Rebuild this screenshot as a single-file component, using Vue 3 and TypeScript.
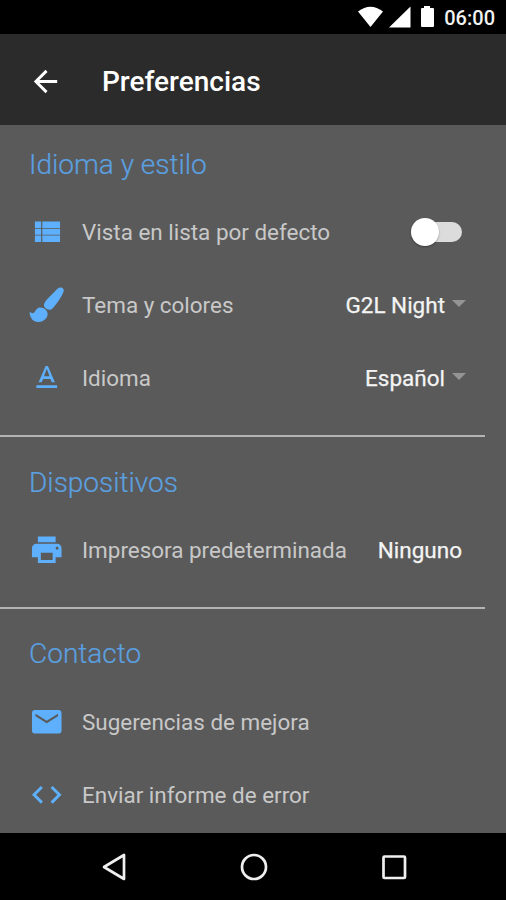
<script setup lang="ts">
import { ref } from 'vue'

type Kind = 'toggle' | 'select' | 'value' | 'link'
interface Row { icon: string; box: string; label: string; kind: Kind; value?: string }
interface Section { title: string; rows: Row[] }

const grid = '0 0 24 24'
const sections: Section[] = [
  {
    title: 'Idioma y estilo',
    rows: [
      { icon: 'M4 14h4.2v-4H4v4zm0 5h4.2v-4.4H4V19zM4 9.4h4.2V5H4v4.4zm5 4.6h12v-4H9v4zm0 5h12v-4.4H9V19zM9 5v4.4h12V5H9z', box: grid, label: 'Vista en lista por defecto', kind: 'toggle' },
      { icon: 'M31.2.5C34 .2 35.4 2.5 34.4 5C33 9 27.500 17.500 23.500 21.500C20.500 24.500 14.500 21.500 15 17.500C15.300 15 18 12.600 20.500 9.700L28 2.200C29 1.200 30 .7 31.200.500ZM10.700 20.500C14.500 20 18.300 23 18.600 26.500C18.900 31 15 34.700 9.500 35C4.500 35.200 1.200 31.500.500 25.500C1.800 24.800 2.800 26.800 4.500 26C6.500 25 6.800 21 10.700 20.500Z', box: '0 0 35.5 35.5', label: 'Tema y colores', kind: 'select', value: 'G2L Night' },
      { icon: 'M5 17v2h14v-2H5zm4.500-4.200h5l.9 2.200h2.100L12.750 4h-1.500L6.500 15h2.100l.9-2.200zM12 5.980L13.870 11h-3.740L12 5.980z', box: grid, label: 'Idioma', kind: 'select', value: 'Español' },
    ],
  },
  {
    title: 'Dispositivos',
    rows: [
      { icon: 'M19 8H5c-1.660 0-3 1.340-3 3v6h4v4h12v-4h4v-6c0-1.660-1.340-3-3-3zm-3 11H8v-5h8v5zm3-7c-.55 0-1-.45-1-1s.45-1 1-1 1 .45 1 1-.45 1-1 1zm-1-9H6v4h12V3z', box: grid, label: 'Impresora predeterminada', kind: 'value', value: 'Ninguno' },
    ],
  },
  {
    title: 'Contacto',
    rows: [
      { icon: 'M20 4H4c-1.100 0-1.990.9-1.990 2L2 18c0 1.100.9 2 2 2h16c1.100 0 2-.9 2-2V6c0-1.100-.9-2-2-2zm-.4 4.250L12 13l-7.600-4.750V6.600l7.600 4.750 7.600-4.750z', box: grid, label: 'Sugerencias de mejora', kind: 'link' },
      { icon: 'M9.400 16.600L4.800 12l4.600-4.600L8 6l-6 6 6 6 1.400-1.400zm5.200 0l4.600-4.600-4.600-4.600L16 6l6 6-6 6-1.400-1.400z', box: grid, label: 'Enviar informe de error', kind: 'link' },
    ],
  },
]
const listView = ref(false)
</script>

<template>
  <div class="screen">
    <div class="status">
      <svg class="status-icons" viewBox="0 0 80 34" fill="#fff">
        <path d="M0 11.500Q12.500 2 25 11.500L12.500 27Z" />
        <path d="M52.500 6.500V27.500H31Z" />
        <path d="M66 6h6v2h3q1 0 1 1v17q0 1-1 1H64q-1 0-1-1V9q0-1 1-1h2z" />
      </svg>
      <span class="clock">06:00</span>
    </div>
    <header class="appbar">
      <svg class="back" viewBox="0 0 24 24" fill="#fff"><path d="M20 11H7.830l5.590-5.590L12 4l-8 8 8 8 1.410-1.410L7.830 13H20v-2z" /></svg>
      <h1>Preferencias</h1>
    </header>
    <main class="content">
      <section v-for="s in sections" :key="s.title" class="section">
        <h2>{{ s.title }}</h2>
        <div v-for="r in s.rows" :key="r.label" class="row">
          <svg class="icon" :viewBox="r.box"><path :d="r.icon" /></svg>
          <span class="label">{{ r.label }}</span>
          <button v-if="r.kind === 'toggle'" class="toggle" :class="{ on: listView }" @click="listView = !listView"><span class="knob" /></button>
          <span v-else-if="r.value" class="value" :class="r.kind">{{ r.value }}<i v-if="r.kind === 'select'" class="caret" /></span>
        </div>
      </section>
    </main>
    <nav class="navbar">
      <svg viewBox="0 0 30 30"><path d="M25 3V27L5 15Z" /></svg>
      <svg viewBox="0 0 30 30"><circle cx="15" cy="15" r="12" /></svg>
      <svg viewBox="0 0 30 30"><rect x="4.500" y="4.500" width="21.500" height="21.500" rx="1" /></svg>
    </nav>
  </div>
</template>

<style>
body { margin: 0; background: #000; }
</style>

<style scoped>
.screen { width: 506px; height: 900px; display: flex; flex-direction: column; overflow: hidden; background: #5a5a5a; font-family: Roboto, "Liberation Sans", sans-serif; }
.status { height: 34px; flex: none; background: #000; display: flex; align-items: center; justify-content: flex-end; padding-right: 11px; box-sizing: border-box; }
.status-icons { width: 80px; height: 34px; margin-right: 6px; }
.clock { color: #f2f2f2; font-size: 20px; font-weight: 500; line-height: 34px; padding-top: 2px; }
.appbar { height: 91px; flex: none; background: #2b2b2b; display: flex; align-items: center; padding: 3px 0 0 28px; box-sizing: border-box; }
.back { width: 35px; height: 35px; margin-right: 39px; }
h1 { margin: 0; padding-top: 2px; color: #fff; font-size: 28px; font-weight: 500; line-height: 36px; }
.content { height: 708px; flex: none; overflow: hidden; }
.section { padding-bottom: 20px; }
.section:not(:last-child) { border-bottom: 2px solid; border-image: linear-gradient(to right, #b4b4b4 484px, transparent 484px) 1; }
h2 { margin: 0; height: 70.5px; padding: 21px 0 0 29px; box-sizing: border-box; color: #5ba0e0; font-size: 28px; font-weight: 300; line-height: 38px; -webkit-text-stroke: .2px #5ba0e0; }
.section + .section h2 { height: 77px; padding-top: 27px; }
.section:last-child h2 { padding-top: 26px; }
.row { height: 73px; display: flex; align-items: center; padding: 0 44px 0 29px; }
.icon { width: 35.5px; height: 35.5px; flex: none; fill: #5eb0fc; margin-right: 17.5px; }
.label { color: #c8c8c8; font-size: 22.45px; line-height: 30px; flex: 1; white-space: nowrap; }
.value { color: #f4f4f4; font-size: 22.5px; line-height: 30px; display: flex; align-items: center; white-space: nowrap; -webkit-text-stroke: .25px #f4f4f4; }
.value.select { margin-right: -4px; }
.caret { border: 7px solid transparent; border-top-color: #949494; border-bottom: 0; margin: -3px 0 0 7px; }
.toggle { width: 51px; height: 28px; border: 0; padding: 0; display: flex; align-items: center; background: none; position: relative; }
.toggle::before { content: ""; position: absolute; left: 4px; right: 0; top: 4px; height: 20px; border-radius: 10px; background: #dcdcdc; }
.knob { width: 28px; height: 28px; border-radius: 50%; background: #fff; position: relative; box-shadow: 0 1px 2px rgba(0, 0, 0, .35); }
.toggle.on .knob { margin-left: auto; }
.navbar { height: 67px; flex: none; background: #000; display: flex; justify-content: center; align-items: center; gap: 110px; padding-left: 2px; }
.navbar svg { width: 30px; height: 30px; fill: none; stroke: #efefef; stroke-width: 2.7; stroke-linejoin: round; }
</style>
